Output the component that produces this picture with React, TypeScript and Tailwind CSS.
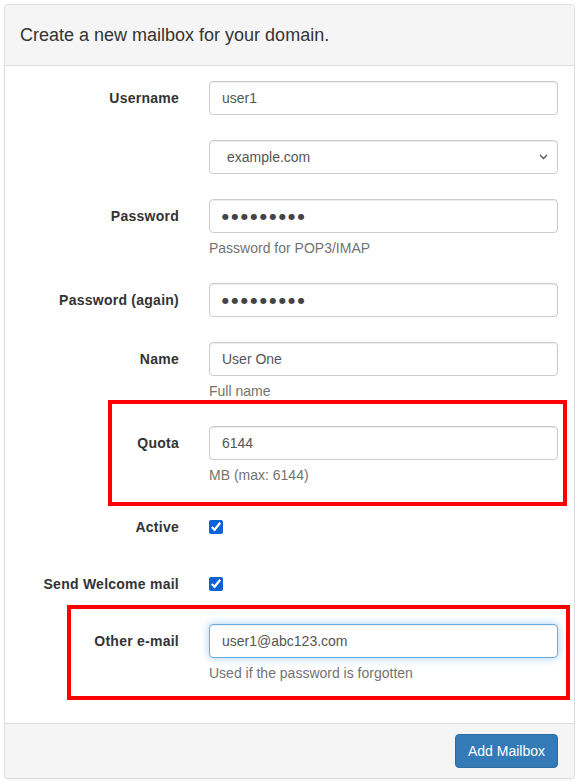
import React from "react";

type Row = {
  label: string;
  kind: "text" | "password" | "select" | "check";
  value?: string;
  help?: string;
  focused?: boolean;
};

const rows: Row[] = [
  { label: "Username", kind: "text", value: "user1" },
  { label: "", kind: "select", value: "example.com" },
  { label: "Password", kind: "password", value: "●●●●●●●●●", help: "Password for POP3/IMAP" },
  { label: "Password (again)", kind: "password", value: "●●●●●●●●●" },
  { label: "Name", kind: "text", value: "User One", help: "Full name" },
  { label: "Quota", kind: "text", value: "6144", help: "MB (max: 6144)" },
  { label: "Active", kind: "check" },
  { label: "Send Welcome mail", kind: "check" },
  { label: "Other e-mail", kind: "text", value: "user1@abc123.com", help: "Used if the password is forgotten", focused: true },
];

const inputBase =
  "block w-full h-[34px] px-[12px] text-[14px] text-[#555] bg-white border rounded-[4px] outline-none";

function Control({ row }: { row: Row }) {
  if (row.kind === "check") {
    return (
      <div className="h-[34px] flex items-center">
        <input type="checkbox" checked readOnly className="w-[14px] h-[14px] m-0 accent-[#0b62d6]" />
      </div>
    );
  }
  if (row.kind === "select") {
    return (
      <div className={`${inputBase} border-[#ccc] shadow-[inset_0_1px_1px_rgba(0,0,0,0.075)] flex items-center justify-between pl-[17px] pr-[9px]`}>
        <span>{row.value}</span>
        <svg width="9" height="6" viewBox="0 0 9 6" fill="none">
          <path d="M1 1l3.5 3.5L8 1" stroke="#555" strokeWidth="1.3" />
        </svg>
      </div>
    );
  }
  if (row.kind === "password") {
    return (
      <div className={`${inputBase} border-[#ccc] shadow-[inset_0_1px_1px_rgba(0,0,0,0.075)] flex items-center`}>
        <span className="font-['DejaVu_Sans',sans-serif] text-[8px] tracking-[2.5px] text-[#444] pt-[1px]">{row.value}</span>
      </div>
    );
  }
  return (
    <input
      type="text"
      value={row.value}
      readOnly
      className={
        row.focused
          ? `${inputBase} border-[#66afe9] shadow-[inset_0_1px_1px_rgba(0,0,0,0.075),0_0_8px_rgba(102,175,233,0.6)]`
          : `${inputBase} border-[#ccc] shadow-[inset_0_1px_1px_rgba(0,0,0,0.075)]`
      }
    />
  );
}

export default function App() {
  return (
    <div className="relative w-[582px] h-[784px] bg-white pt-[4px] pl-[4px] font-['Liberation_Sans',Arial,sans-serif] text-[14px] text-[#333]">
      <div className="w-[571px] border border-[#ddd] rounded-[4px] bg-white shadow-[0_1px_1px_rgba(0,0,0,0.05)]">
        {/* Heading */}
        <div className="h-[61px] bg-[#f5f5f5] border-b border-[#ddd] rounded-t-[3px] px-[15px] flex items-center">
          <h3 className="text-[18px] text-[#333] leading-[20px] pb-[1px]">Create a new mailbox for your domain.</h3>
        </div>

        {/* Form */}
        <div className="pt-[15px] pb-[15px]">
          {rows.map((row, i) => (
            <div key={i} className={`flex ${row.kind === "check" ? "mb-[23px]" : "mb-[25px]"}`}>
              <div className="w-[189px] pr-[15px] h-[34px] flex items-center justify-end font-bold text-[14px] tracking-[0.25px] text-[#333]">
                {row.label}
              </div>
              <div className="flex-1 pl-[15px] pr-[16px]">
                <Control row={row} />
                {row.help && <p className="mt-[5px] leading-[20px] text-[#737373]">{row.help}</p>}
              </div>
            </div>
          ))}
        </div>

        {/* Footer */}
        <div className="bg-[#f5f5f5] border-t border-[#ddd] rounded-b-[3px] pl-[15px] pr-[16px] py-[10px] flex justify-end">
          <button className="h-[34px] px-[12px] text-[14px] text-white bg-[#337ab7] border border-[#2e6da4] rounded-[4px]">
            Add Mailbox
          </button>
        </div>
      </div>

      {/* Annotation boxes */}
      <div className="absolute left-[108px] top-[400px] w-[459px] h-[106px] border-[4px] border-[#ff0000]" />
      <div className="absolute left-[67px] top-[605px] w-[503px] h-[95px] border-[4px] border-[#ff0000]" />
    </div>
  );
}
